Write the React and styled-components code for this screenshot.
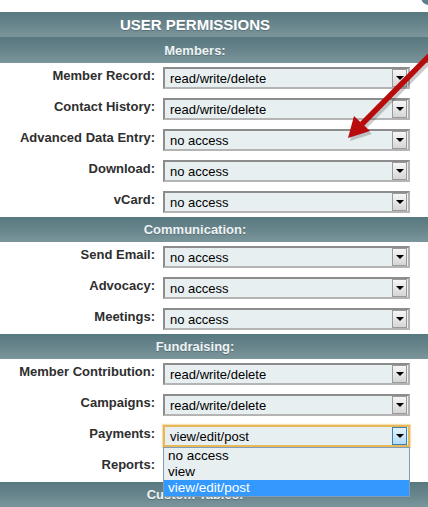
import React from 'react';
import styled, { createGlobalStyle, css } from 'styled-components';

const GlobalStyle = createGlobalStyle`
  html, body {
    margin: 0;
    padding: 0;
    background: #ffffff;
  }
  body {
    font-family: "Liberation Sans", Arial, sans-serif;
  }
`;

const Page = styled.div`
  position: relative;
  width: 428px;
  height: 507px;
  overflow: hidden;
  padding-top: 12px;
  box-sizing: border-box;
  background: #ffffff;
`;

const CloseDot = styled.div`
  position: absolute;
  top: -11px;
  right: -9px;
  width: 16px;
  height: 16px;
  border-radius: 50%;
  background: #5d7f8c;
`;

const headerBand = css`
  display: flex;
  align-items: center;
  justify-content: center;
  padding-right: 38px;
  background: linear-gradient(#587880 0%, #6a868d 55%, #7b969b 100%);
  font-weight: bold;
  text-shadow: 0 1px 0 rgba(40, 60, 66, 0.35);
`;

const MainHeader = styled.div`
  ${headerBand};
  height: 26px;
  color: #ffffff;
  font-size: 15px;
  border-bottom: 1px solid #5c7a81;
  box-sizing: border-box;
`;

const SectionHeader = styled.div`
  ${headerBand};
  height: 25px;
  color: #eef3f4;
  font-size: 13px;
`;

const Rows = styled.div`
  display: flex;
  flex-direction: column;
  gap: 9px;
  padding: 4px 18px 4px 0;
`;

const Row = styled.div`
  display: grid;
  grid-template-columns: 155px 247px;
  column-gap: 8px;
  align-items: start;
`;

const Label = styled.div`
  text-align: right;
  font-size: 13px;
  font-weight: bold;
  color: #2e2e2e;
  line-height: 16px;
  padding-top: 1px;
  white-space: nowrap;
`;

const SelectWrap = styled.div`
  position: relative;
`;

const Spacer = styled.div`
  height: 22px;
`;

const SelectBox = styled.div`
  height: 22px;
  box-sizing: border-box;
  display: flex;
  align-items: center;
  justify-content: space-between;
  padding: 0 1px 0 5px;
  background: #e8eff1;
  font-size: 13px;
  color: #000000;
  border-style: solid;
  border-width: 2px;
  border-color: ${(p) =>
    p.$focused ? '#e6b85a' : '#8c8c8c #b4b4b4 #b4b4b4 #8c8c8c'};
  box-shadow: ${(p) => (p.$focused ? '0 0 1px 1px rgba(240, 200, 120, 0.6)' : 'none')};
`;

const ArrowButton = styled.div`
  width: 15px;
  height: 18px;
  box-sizing: border-box;
  display: flex;
  align-items: center;
  justify-content: center;
  border: 1px solid ${(p) => (p.$focused ? '#3c7fb1' : '#9a9a9a')};
  background: ${(p) =>
    p.$focused
      ? 'linear-gradient(#e4f3fc, #b6dbf5)'
      : 'linear-gradient(#f6f6f6, #d6d6d6)'};

  &::after {
    content: '';
    width: 0;
    height: 0;
    border-left: 4px solid transparent;
    border-right: 4px solid transparent;
    border-top: 4px solid #000000;
  }
`;

const DropList = styled.div`
  position: absolute;
  top: 22px;
  left: 0;
  width: 247px;
  box-sizing: border-box;
  border: 1px solid #7f9db9;
  background: #e8eff1;
  z-index: 2;
`;

const DropItem = styled.div`
  height: 16px;
  line-height: 16px;
  padding-left: 4px;
  font-size: 13.5px;
  color: ${(p) => (p.$active ? '#ffffff' : '#000000')};
  background: ${(p) => (p.$active ? '#3399ff' : 'transparent')};
`;

const ArrowOverlay = styled.svg`
  position: absolute;
  top: 0;
  left: 0;
  pointer-events: none;
  z-index: 3;
`;

const sections = [
  {
    title: 'Members:',
    rows: [
      ['Member Record:', 'read/write/delete'],
      ['Contact History:', 'read/write/delete'],
      ['Advanced Data Entry:', 'no access'],
      ['Download:', 'no access'],
      ['vCard:', 'no access'],
    ],
  },
  {
    title: 'Communication:',
    rows: [
      ['Send Email:', 'no access'],
      ['Advocacy:', 'no access'],
      ['Meetings:', 'no access'],
    ],
  },
  {
    title: 'Fundraising:',
    rows: [
      ['Member Contribution:', 'read/write/delete'],
      ['Campaigns:', 'read/write/delete'],
      ['Payments:', 'view/edit/post', true],
      ['Reports:', null],
    ],
  },
];

const Select = ({ value, open }) => (
  <SelectWrap>
    <SelectBox $focused={open}>
      <span>{value}</span>
      <ArrowButton $focused={open} />
    </SelectBox>
    {open && (
      <DropList>
        <DropItem>no access</DropItem>
        <DropItem>view</DropItem>
        <DropItem $active>view/edit/post</DropItem>
      </DropList>
    )}
  </SelectWrap>
);

const RedArrow = () => (
  <ArrowOverlay width="428" height="507" viewBox="0 0 428 507">
    <g opacity="0.25" transform="translate(2 3)">
      <line x1="445" y1="40" x2="362" y2="124" stroke="#333" strokeWidth="5.5" />
      <polygon points="348,138 354,116 370,131" fill="#333" />
    </g>
    <line x1="445" y1="40" x2="362" y2="124" stroke="#b80c0c" strokeWidth="5.5" />
    <polygon points="348,138 354,116 370,131" fill="#b80c0c" />
  </ArrowOverlay>
);

const App = () => {
  return (
    <Page>
      <GlobalStyle />
      <CloseDot />
      <MainHeader>USER PERMISSIONS</MainHeader>
      {sections.map((section) => (
        <React.Fragment key={section.title}>
          <SectionHeader>{section.title}</SectionHeader>
          <Rows>
            {section.rows.map(([label, value, open]) => (
              <Row key={label}>
                <Label>{label}</Label>
                {value ? <Select value={value} open={open} /> : <Spacer />}
              </Row>
            ))}
          </Rows>
        </React.Fragment>
      ))}
      <SectionHeader>Custom Tables:</SectionHeader>
      <RedArrow />
    </Page>
  );
};

export default App;
